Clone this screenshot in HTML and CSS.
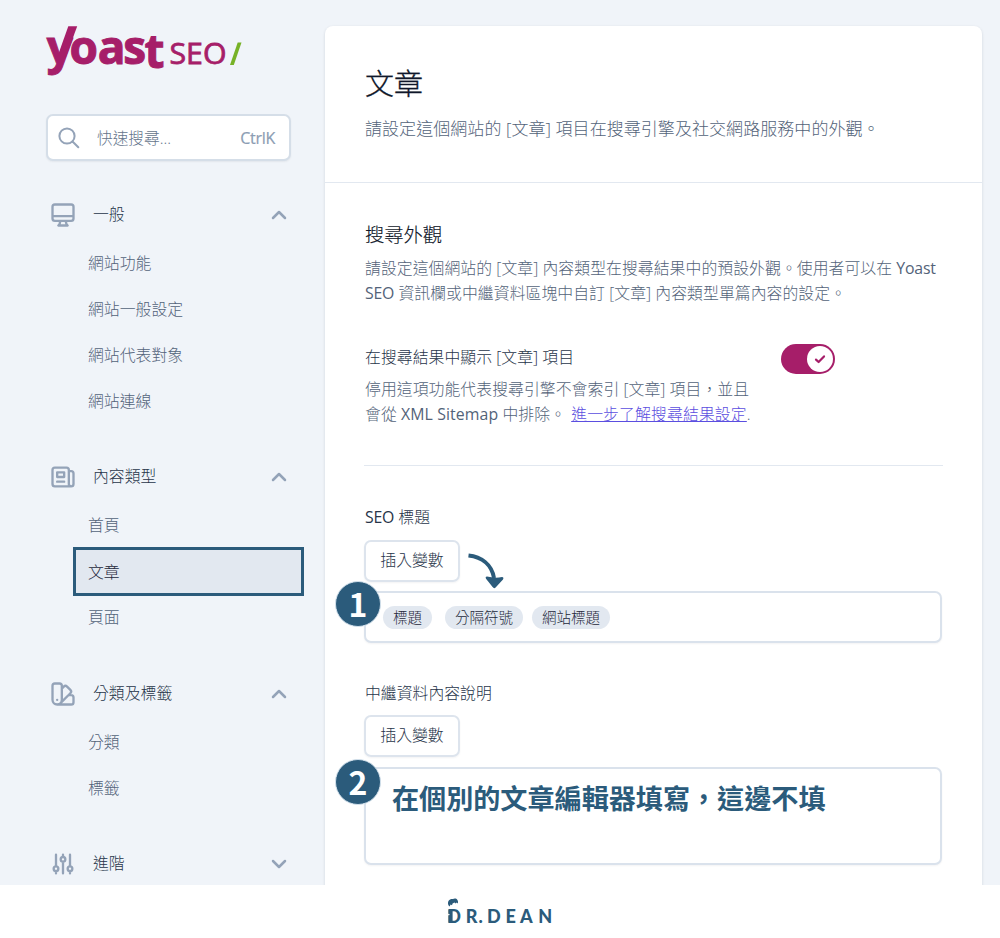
FILE: index.html
```html
<!DOCTYPE html>
<html lang="zh-Hant">
<head>
<meta charset="utf-8">
<title>Yoast SEO</title>
<link rel="stylesheet" href="styles.css">
</head>
<body>
<div class="app">
  <aside class="sidebar">
    <svg class="brand" viewBox="0 0 200 60" width="200" height="60">
      <text class="brand-name" x="0.8 23.6 51.8 77.2 98.6" y="44 44 44 44 47.5">yoast</text>
      <path class="brand-fill" d="M22.3 6.3H31.2L19.5 38L11 38Z"/>
      <text class="brand-seo" x="123.5" y="44" textLength="57" lengthAdjust="spacingAndGlyphs">SEO</text>
      <path class="brand-slash" d="M191.7 22.5H195.5L187.8 45H184Z"/>
    </svg>
    <div class="search">
      <svg class="icon" width="24" height="24" viewBox="0 0 24 24"><circle cx="10" cy="10" r="7.6"/><path d="M15.5 15.5L21.3 21.3"/></svg>
      <span class="search-label">快速搜尋...</span>
      <span class="search-key">CtrlK</span>
    </div>
    <nav>
      <section class="group">
        <div class="group-head">
          <svg class="icon" width="28" height="28" viewBox="0 0 24 24"><path d="M9.75 17L9 20l-1 1h8l-1-1-.75-3M3 13h18M5 17h14a2 2 0 002-2V5a2 2 0 00-2-2H5a2 2 0 00-2 2v10a2 2 0 002 2z"/></svg>
          <span>一般</span>
          <svg class="chevron" width="16" height="16" viewBox="0 0 16 16"><path d="M2 11L8 5L14 11"/></svg>
        </div>
        <a class="item">網站功能</a>
        <a class="item">網站一般設定</a>
        <a class="item">網站代表對象</a>
        <a class="item">網站連線</a>
      </section>
      <section class="group">
        <div class="group-head">
          <svg class="icon" width="28" height="28" viewBox="0 0 24 24"><path d="M19 20H5a2 2 0 01-2-2V6a2 2 0 012-2h10a2 2 0 012 2v1m2 13a2 2 0 01-2-2V7m2 13a2 2 0 002-2V9a2 2 0 00-2-2h-2m-4-3H9M7 16h6M7 8h6v4H7V8z"/></svg>
          <span>內容類型</span>
          <svg class="chevron" width="16" height="16" viewBox="0 0 16 16"><path d="M2 11L8 5L14 11"/></svg>
        </div>
        <a class="item">首頁</a>
        <a class="item active">文章</a>
        <a class="item">頁面</a>
      </section>
      <section class="group">
        <div class="group-head">
          <svg class="icon" width="28" height="28" viewBox="0 0 24 24"><path d="M7 21a4 4 0 01-4-4V5a2 2 0 012-2h4a2 2 0 012 2v12a4 4 0 01-4 4zm0 0h12a2 2 0 002-2v-4a2 2 0 00-2-2h-2.343M11 7.343l1.657-1.657a2 2 0 012.828 0l2.829 2.829a2 2 0 010 2.828l-8.486 8.485M7 17h.01"/></svg>
          <span>分類及標籤</span>
          <svg class="chevron" width="16" height="16" viewBox="0 0 16 16"><path d="M2 11L8 5L14 11"/></svg>
        </div>
        <a class="item">分類</a>
        <a class="item">標籤</a>
      </section>
      <section class="group">
        <div class="group-head">
          <svg class="icon" width="28" height="28" viewBox="0 0 24 24"><path d="M12 6V4m0 2a2 2 0 100 4m0-4a2 2 0 110 4m0 0v10m-6-2a2 2 0 100-4m0 4a2 2 0 110-4m0 4v2m0-6V4m12 14a2 2 0 100-4m0 4a2 2 0 110-4m0 4v2m0-6V4"/></svg>
          <span>進階</span>
          <svg class="chevron" width="16" height="16" viewBox="0 0 16 16"><path d="M2 5L8 11L14 5"/></svg>
        </div>
      </section>
    </nav>
  </aside>
  <main class="panel">
    <header class="panel-head">
      <h1>文章</h1>
      <p>請設定這個網站的 [文章] 項目在搜尋引擎及社交網路服務中的外觀。</p>
    </header>
    <div class="panel-body">
      <h2>搜尋外觀</h2>
      <p class="copy">請設定這個網站的 [文章] 內容類型在搜尋結果中的預設外觀。使用者可以在 <span class="latin">Yoast</span><br><span class="latin">SEO</span> 資訊欄或中繼資料區塊中自訂 [文章] 內容類型單篇內容的設定。</p>
      <div class="setting">
        <div class="setting-text">
          <h3>在搜尋結果中顯示 [文章] 項目</h3>
          <p class="copy">停用這項功能代表搜尋引擎不會索引 [文章] 項目，並且<br>會從 <span class="latin wide">XML Sitemap</span> 中排除。 <a class="link">進一步了解搜尋結果設定</a>.</p>
        </div>
        <span class="toggle"><span class="knob"><svg width="12" height="12" viewBox="0 0 12 12"><path d="M2 6.6L4.6 9L10 3.4"/></svg></span></span>
      </div>
      <hr>
      <div class="field">
        <label><span class="latin">SEO</span> 標題</label>
        <div class="button-row">
          <span class="button">插入變數</span>
          <svg class="arrow" width="38" height="38" viewBox="0 0 38 38"><path class="arrow-line" d="M1.5 4.6C14 6 24.5 13 27 27"/><path class="arrow-tip" d="M20 25.5Q28 27.5 35 26Q37.2 26.4 36 28.5L28.6 36.5Q27 38 25.6 36L19 27.8Q18 25.5 20 25.5Z"/></svg>
        </div>
        <div class="input tags">
          <span class="step">1</span>
          <span class="tag">標題</span><span class="tag">分隔符號</span><span class="tag">網站標題</span>
        </div>
      </div>
      <div class="field second">
        <label>中繼資料內容說明</label>
        <div class="button-row"><span class="button">插入變數</span></div>
        <div class="input area">
          <span class="step">2</span>
          <strong>在個別的文章編輯器填寫，這邊不填</strong>
        </div>
      </div>
    </div>
  </main>
</div>
<footer class="footer">
  <svg width="110" height="30" viewBox="0 0 110 30">
    <text class="dean" y="25.5" x="2.2 20.7 33.5 37 42 60.5 75 93.2">DR. DEAN</text>
    <path class="dean-fill" d="M3.6 8.6C1.6 4 5 1.4 8 2C10.6 .4 14 2.6 12.8 6.6L11.6 5.4L10.8 6.6L9.4 5.6L7.6 6.4L7 8.2L5.6 7.4L4.6 9.6Z"/>
    <path class="dean-fill" d="M3.4 12.5H7.6V25.7H3.4Z"/>
    <circle class="dean-gap" cx="3.8" cy="17.6" r=".8"/>
  </svg>
</footer>
</body>
</html>
```

FILE: styles.css
```css
* { box-sizing: border-box; }
body {
  margin: 0;
  height: 938px;
  overflow: hidden;
  background: #fff;
  color: #536379;
  font: 300 15.85px/24px "Open Sans", "Noto Sans CJK TC", sans-serif;
}
h1, h2, h3, p { margin: 0; font-weight: 300; }
.app {
  display: flex;
  height: 885px;
  background: #f0f4f9;
  overflow: hidden;
}
.sidebar { width: 325px; padding: 20px 0 0 46px; flex: none; }
.brand { display: block; overflow: visible; }
.brand-name { font: 700 46px "Open Sans", sans-serif; fill: #a61e69; stroke: #a61e69; stroke-width: 1px; }
.brand-seo { font: 400 29px "Open Sans", sans-serif; fill: #a61e69; stroke: #a61e69; stroke-width: .8px; }
.brand-fill { fill: #a61e69; }
.brand-slash { fill: #77b227; }
.search {
  display: flex;
  align-items: center;
  width: 245px;
  height: 47px;
  margin-top: 34px;
  padding: 0 14px 0 9px;
  background: #fff;
  border: 2px solid #d5dee8;
  border-radius: 7px;
  box-shadow: 0 1px 2px rgba(15, 23, 42, .06);
}
.search-label { margin-left: 16px; color: #64748b; font-size: 15.7px; }
.search-key { margin-left: auto; color: #8c9db3; font: 400 16px "Open Sans", sans-serif; letter-spacing: -.3px; -webkit-text-stroke: .2px #8c9db3; }
.icon { flex: none; fill: none; stroke: #94a3b8; stroke-width: 2; stroke-linecap: round; stroke-linejoin: round; }
.chevron { margin: 2px 0 0 auto; fill: none; stroke: #94a3b8; stroke-width: 2.5; stroke-linecap: round; stroke-linejoin: round; }
nav { padding-top: 28px; }
.group { display: flex; flex-direction: column; margin-bottom: 27px; }
.group:nth-child(2) { margin-bottom: 28px; }
.group-head {
  display: flex;
  align-items: center;
  width: 241px;
  height: 50px;
  margin-bottom: 1px;
  padding-left: 3px;
  color: #273449;
}
.group-head .icon { margin-top: 2px; }
.group-head span { margin-left: 16px; }
.item { display: block; height: 46px; padding-left: 42px; line-height: 46px; }
.active {
  width: 231px;
  height: 49px;
  margin: -1px 0 -2px 27px;
  padding-left: 12px;
  line-height: 44px;
  background: #e2e8f0;
  border: 3px solid #2b5b7b;
  color: #1e293b;
}
.panel {
  width: 657px;
  height: 870px;
  margin-top: 26px;
  background: #fff;
  border-radius: 8px;
  box-shadow: 0 1px 3px rgba(15, 23, 42, .14);
}
.panel-head {
  height: 157px;
  padding: 38px 40px 0;
  border-bottom: 1px solid #e2e8f0;
}
h1 { color: #0f172a; font-size: 29px; line-height: 40px; -webkit-text-stroke: .3px #0f172a; }
.panel-head p { margin-top: 12px; font-size: 17px; letter-spacing: .06px; line-height: 26px; }
.panel-body { padding: 39px 39px 0; }
h2 { padding-left: 1px; color: #0f172a; font-size: 19.3px; line-height: 26px; -webkit-text-stroke: .15px #0f172a; }
.copy { margin-top: 8px; padding-left: 1px; line-height: 24.6px; letter-spacing: .05px; white-space: nowrap; }
.latin { font-weight: 400; letter-spacing: -.2px; }
.wide { letter-spacing: .1px; }
.setting { display: flex; margin-top: 40px; }
.setting-text { width: 417px; flex: none; }
h3 { padding-left: 1px; color: #273449; font-size: 15.85px; letter-spacing: .04px; line-height: 24px; }
.link { color: #5b4ee0; text-decoration: underline; letter-spacing: .12px; margin-left: 1px; }
.toggle {
  display: flex;
  justify-content: flex-end;
  width: 54px;
  height: 30px;
  margin-top: -1.5px;
  padding: 2px;
  border-radius: 15px;
  background: #a61e69;
}
.knob { display: grid; place-items: center; width: 26px; height: 26px; border-radius: 50%; background: #fff; }
.knob path { fill: none; stroke: #a61e69; stroke-width: 2.2; stroke-linecap: round; stroke-linejoin: round; }
hr { height: 1px; margin: 39px 0 39px; border: 0; background: #e2e8f0; }
.field label { display: block; padding-left: 1px; color: #273449; line-height: 24px; }
.button-row { display: flex; height: 42px; margin-top: 11px; }
.button {
  width: 96px;
  height: 42px;
  border: 2px solid #dde4ed;
  border-radius: 7px;
  color: #273449;
  line-height: 37px;
  text-align: center;
  box-shadow: 0 1px 2px rgba(15, 23, 42, .05);
}
.arrow { margin: 11px 0 0 7px; overflow: visible; }
.arrow-line { fill: none; stroke: #2b5b7b; stroke-width: 4; }
.arrow-tip { fill: #2b5b7b; }
.input {
  position: relative;
  width: 578px;
  margin-top: 9px;
  border: 2px solid #dae2ec;
  border-radius: 7px;
  background: #fff;
  box-shadow: 0 1px 2px rgba(15, 23, 42, .05);
}
.tags { display: flex; align-items: center; height: 52px; padding-left: 17px; }
.tag {
  height: 23px;
  margin-right: 9px;
  padding: 0 10px;
  border-radius: 12px;
  background: #e2e8f0;
  color: #1e293b;
  font-size: 14.5px;
  line-height: 23px;
}
.tag:nth-child(2) { margin-right: 13px; }
.second { margin-top: 38px; }
.second .button-row { margin-top: 10px; }
.second .input { margin-top: 10px; }
.area { height: 98px; padding: 12px 0 0 26px; }
.area strong { color: #2b5b7b; font: 700 27.1px/34px "Noto Sans CJK TC", sans-serif; white-space: nowrap; }
.step {
  position: absolute;
  left: -31px;
  top: -12px;
  width: 46px;
  height: 46px;
  border: 1.5px solid #d3e1ec;
  border-radius: 50%;
  background: #2b5b7b;
  color: #fff;
  font: 700 32px/42px "Noto Sans CJK TC", sans-serif;
  text-align: center;
}
.area .step { top: -10px; }
.footer { display: flex; height: 53px; padding: 12px 0 0 445px; }
.dean { font: 900 18px Lato, sans-serif; fill: #2b5b7b; }
.dean-fill { fill: #2b5b7b; }
.dean-gap { fill: #fff; }
```
